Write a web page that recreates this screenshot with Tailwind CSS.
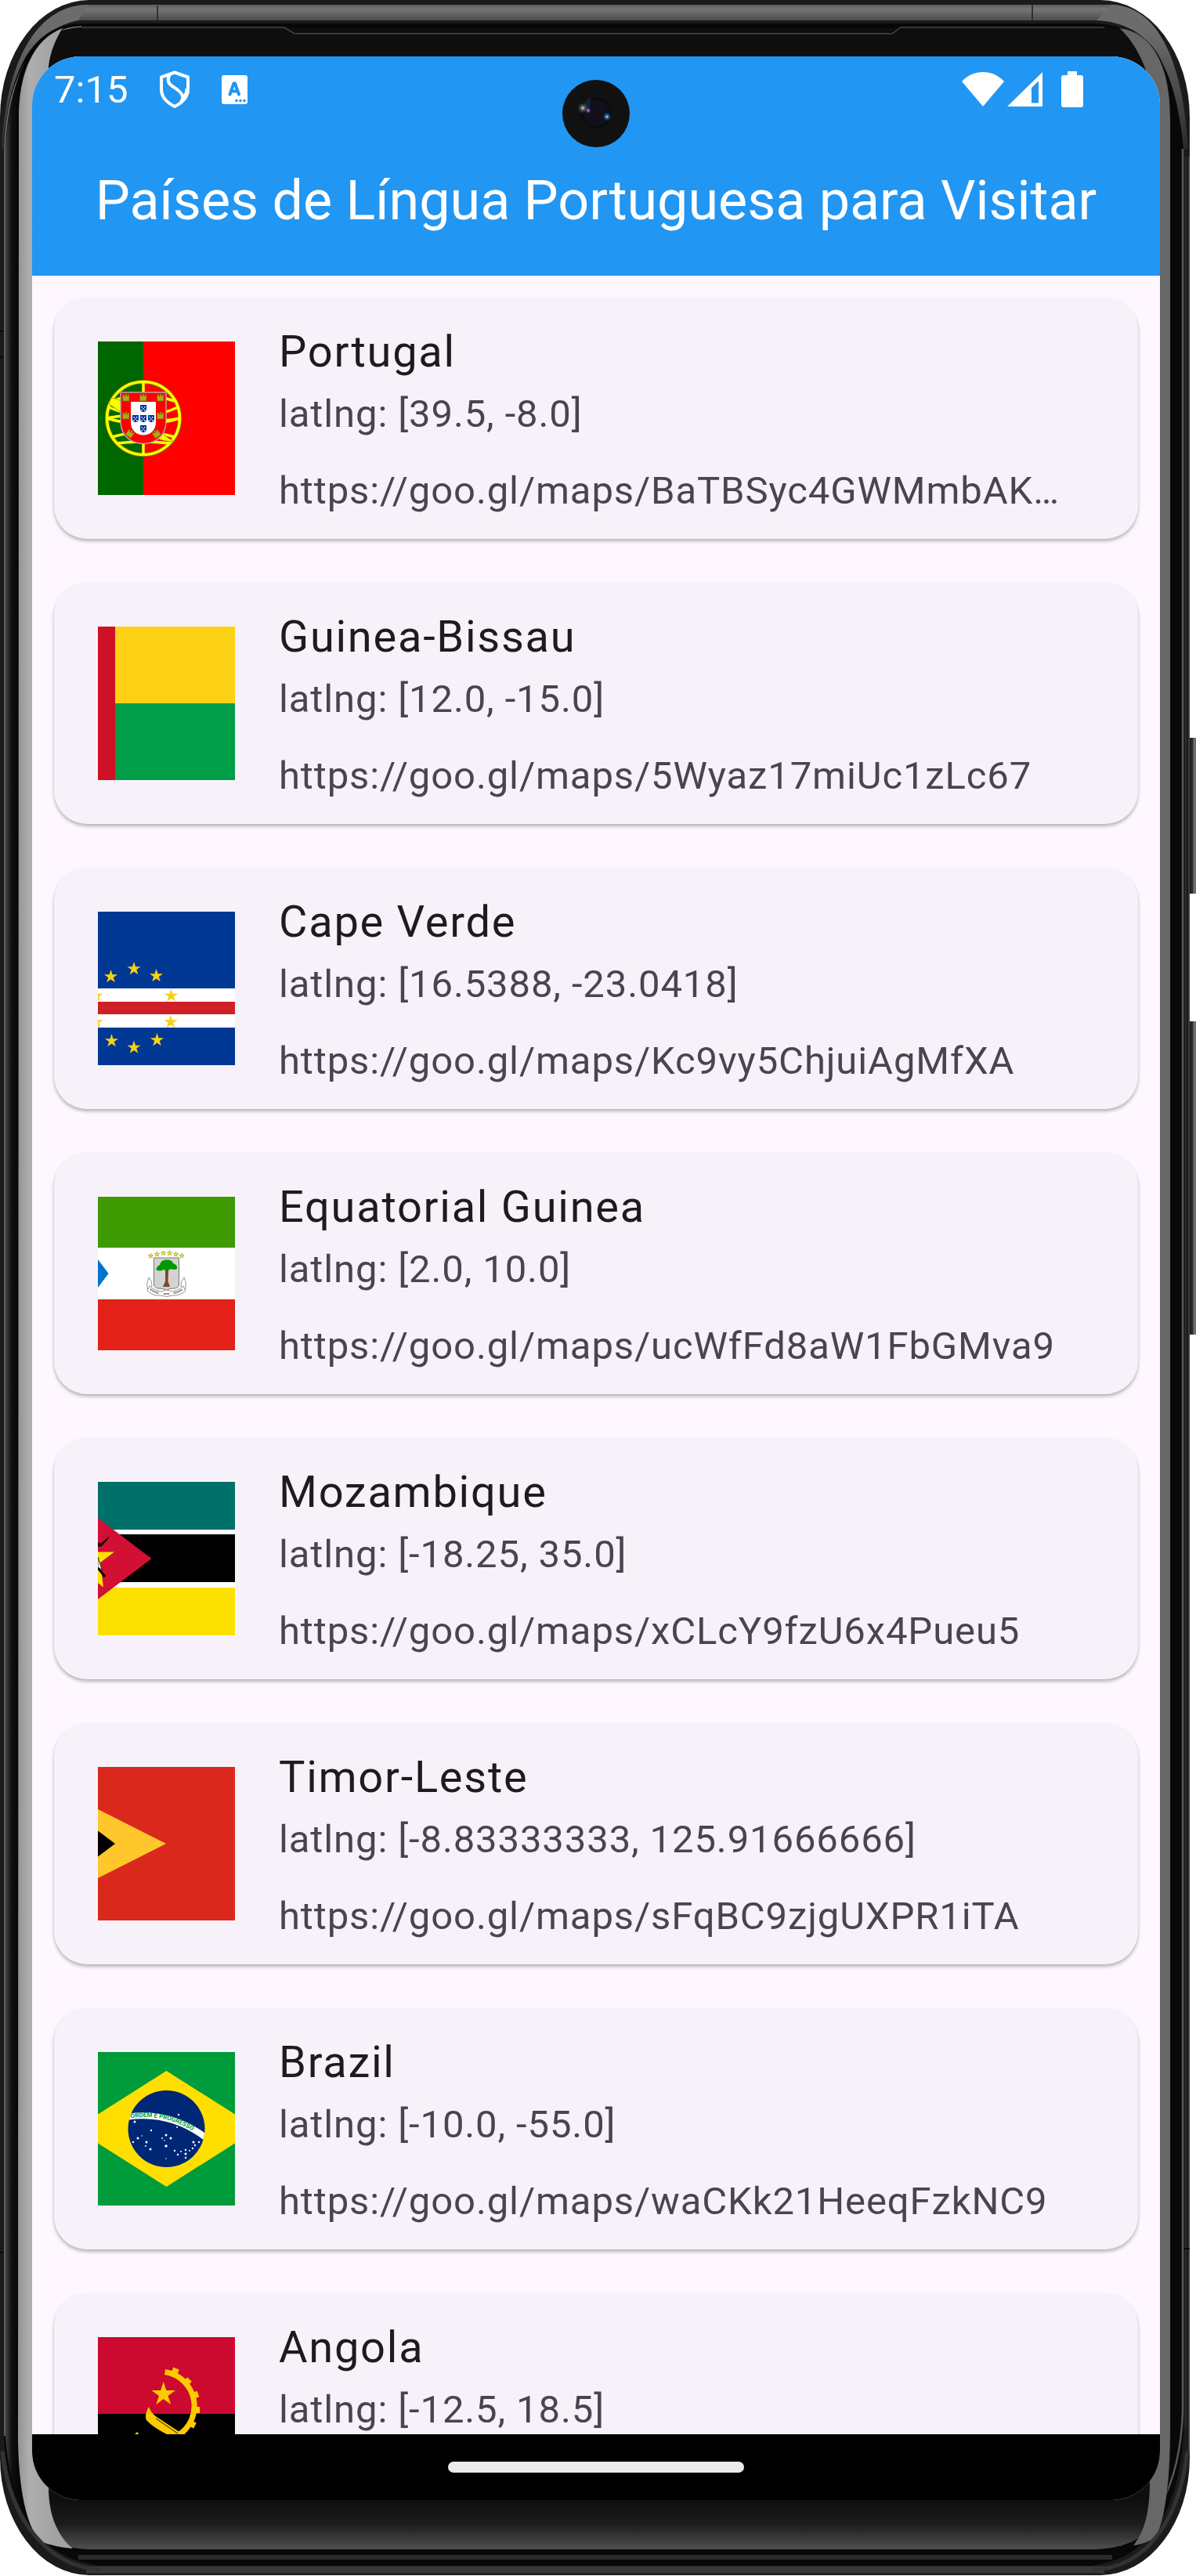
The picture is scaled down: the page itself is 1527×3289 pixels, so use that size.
<!DOCTYPE html>
<html lang="pt">
<head>
<meta charset="utf-8">
<meta name="viewport" content="width=device-width, initial-scale=1">
<title>Países de Língua Portuguesa para Visitar</title>
<script src="https://cdn.jsdelivr.net/npm/@tailwindcss/browser@4"></script>
</head>
<body class="bg-white font-[Roboto,sans-serif]">

<!-- Shared star shape -->
<svg class="absolute size-0" aria-hidden="true">
  <defs>
    <polygon id="star" points="0,-10 2.25,-3.09 9.51,-3.09 3.63,1.18 5.88,8.09 0,3.82 -5.88,8.09 -3.63,1.18 -9.51,-3.09 -2.25,-3.09"/>
  </defs>
</svg>

<div class="relative isolate flex h-screen flex-col overflow-hidden pt-[72px] pr-[46px] pb-[97px] pl-[41px]">

  <!-- Device body -->
  <svg class="absolute inset-0 -z-10 h-full w-full" viewBox="0 0 1527 3289" preserveAspectRatio="none" aria-hidden="true">
    <defs>
      <linearGradient id="topBand" x1="0" y1="0" x2="0" y2="1"><stop offset="0" stop-color="#5c5c5c"/><stop offset=".3" stop-color="#757575"/><stop offset="1" stop-color="#4c4c4c"/></linearGradient>
      <linearGradient id="bodyFade" gradientUnits="userSpaceOnUse" x1="0" y1="40" x2="0" y2="190"><stop offset="0" stop-color="#6c6c6c"/><stop offset="1" stop-color="#2a2a2a"/></linearGradient>
      <linearGradient id="leftDark" gradientUnits="userSpaceOnUse" x1="6" y1="0" x2="24" y2="0"><stop offset="0" stop-color="#4a4a4a"/><stop offset=".5" stop-color="#101010"/><stop offset="1" stop-color="#060606"/></linearGradient>
      <linearGradient id="leftShine" gradientUnits="userSpaceOnUse" x1="23" y1="0" x2="70" y2="0"><stop offset="0" stop-color="#939393"/><stop offset=".3" stop-color="#aeaeae"/><stop offset="1" stop-color="#a2a2a2"/></linearGradient>
      <linearGradient id="glass" gradientUnits="userSpaceOnUse" x1="0" y1="3190" x2="0" y2="3255"><stop offset="0" stop-color="#0e0e0e"/><stop offset=".5" stop-color="#1c1c1c"/><stop offset="1" stop-color="#505050"/></linearGradient>
      <linearGradient id="button" x1="0" y1="0" x2="1" y2="0"><stop offset="0" stop-color="#161616"/><stop offset=".45" stop-color="#2c2c2c"/><stop offset=".65" stop-color="#777"/><stop offset="1" stop-color="#555"/></linearGradient>
    </defs>
    <rect x="1517" y="942" width="12" height="199" rx="3" fill="url(#button)"/>
    <rect x="1517" y="1304" width="12" height="400" rx="3" fill="url(#button)"/>
    <rect x="0" y="0" width="1519" height="3288" rx="114" ry="150" fill="#1b1b1b"/>
    <path d="M2 190 C8 70 52 6 112 6 H1420 C1475 8 1510 70 1517 190 L1508 190 C1500 80 1470 30 1400 26 H100 C50 36 14 80 8 190 Z" fill="url(#bodyFade)"/>
    <path d="M112 6 H1420 L1400 26 H100 Z" fill="url(#topBand)"/>
    <path d="M201 7V29M1318 4V26" stroke="#222" stroke-width="1.5"/>
    <path d="M5 190 C10 80 48 30 104 30 H1400 C1470 34 1500 80 1511 190 V3110 C1504 3215 1460 3270 1390 3276 H130 C60 3270 10 3215 5 3110 Z" fill="#080808"/>
    <path d="M6 3110 V190 C10 90 48 36 104 34" fill="none" stroke="#777" stroke-width="1.5"/>
    <path d="M7 3110 V190 C14 90 40 50 80 36 L90 3254 C40 3240 12 3190 7 3110Z" fill="url(#leftDark)"/>
    <path d="M1510 190 V3080 C1506 3180 1470 3230 1430 3250" fill="none" stroke="#565656" stroke-width="2.5"/>
    <path d="M1514 200V3100" stroke="#3a3a3a" stroke-width="1"/>
    <path d="M1518 200V3130" stroke="#5a5a5a" stroke-width="1"/>
    <!-- Front glass -->
    <path d="M24 150 C24 80 45 36 104 36 H1410 C1475 36 1495 80 1495 150 V3130 C1495 3225 1460 3255 1390 3255 H120 C50 3255 23 3215 24 3130 Z" fill="url(#glass)"/>
    <path d="M80 36 C42 50 24 95 24 150 L23 3120 C25 3195 38 3230 52 3245 Q70 3252 93 3254 C70 3235 62 3205 62 3176 V85 C64 66 72 48 80 36Z" fill="url(#leftShine)"/>
    <path d="M1429 36 C1475 42 1494 90 1494 150 V3100 C1494 3175 1486 3222 1475 3240 Q1462 3248 1447 3250 C1462 3232 1468 3205 1468 3168 V110 C1464 82 1446 50 1429 36Z" fill="#676767"/>
    <path d="M104 35 H363 L376 43 H1139 L1150 35 H1410" fill="none" stroke="#454545" stroke-width="1.5"/>
    <!-- Lower rim -->
    <path d="M100 3265 H1420" stroke="#2b2b2b" stroke-width="6"/>
    <path d="M110 3281 H1410" stroke="#383838" stroke-width="9"/>
    <path d="M3 3130 C12 3215 60 3278 130 3281 M1516 3130 C1506 3215 1466 3278 1396 3281" fill="none" stroke="#333" stroke-width="5"/>
    <path d="M0 423H4M0 456H4M0 2876H4M1512 2871H1519" stroke="#050505" stroke-width="2"/>
  </svg>

  <!-- Screen -->
  <div class="relative flex min-h-0 flex-1 flex-col overflow-hidden rounded-[62px] bg-[#fef7ff]">

    <!-- Front camera -->
    <svg class="absolute top-[30px] left-1/2 z-10 size-[86px] -translate-x-1/2" viewBox="0 0 86 86" aria-hidden="true">
      <defs>
        <radialGradient id="lens"><stop offset="0" stop-color="#160d1a"/><stop offset=".7" stop-color="#10101c"/><stop offset="1" stop-color="#0a0a0b"/></radialGradient>
        <radialGradient id="glowA"><stop offset="0" stop-color="#eef5e0"/><stop offset=".3" stop-color="#8d9684" stop-opacity=".7"/><stop offset="1" stop-color="#3c4238" stop-opacity="0"/></radialGradient>
        <radialGradient id="glowB"><stop offset="0" stop-color="#d8f1ff"/><stop offset=".3" stop-color="#2c75b0"/><stop offset="1" stop-color="#0c2a55" stop-opacity="0"/></radialGradient>
        <radialGradient id="glowC"><stop offset="0" stop-color="#e9b8e8"/><stop offset=".4" stop-color="#6a3f80"/><stop offset="1" stop-color="#25204a" stop-opacity="0"/></radialGradient>
      </defs>
      <circle cx="43" cy="43" r="43" fill="#101111"/>
      <circle cx="43" cy="42" r="20" fill="url(#lens)"/>
      <path d="M25 35 C28 26 32 24 37 23 L33 44 Z" fill="#23406e" opacity=".4"/>
      <circle cx="26" cy="36" r="7" fill="url(#glowA)"/>
      <circle cx="33" cy="39" r="4" fill="url(#glowC)"/>
      <circle cx="57" cy="47" r="6" fill="url(#glowB)"/>
    </svg>

    <header class="bg-[#2196f3] text-white">
      <!-- Status bar -->
      <div class="flex h-[84px] items-center pr-[98px] pl-7">
        <span class="text-[49px] leading-none">7:15</span>
        <svg class="ml-10 h-12 w-10" viewBox="0 0 40 48" fill="none" stroke="#fff" stroke-width="4" stroke-linejoin="round" aria-hidden="true">
          <path d="M20 2.500 L37 8.500 V24 C37 34 30 41 20 46 C10 41 3 34 3 24 V8.500 Z"/>
          <path d="M14 5 C10 12 12 17 17 20 C25 25 30 29 30 33 C31 36 30 38 28 40"/>
          <path d="M35 23 C35 30 32 33 30 34" stroke-width="3"/>
        </svg>
        <svg class="ml-10 h-[37px] w-[33px]" viewBox="0 0 33 37" aria-hidden="true">
          <rect width="33" height="37" rx="3" fill="#fff"/>
          <path d="M10.500 24.500 L15.500 10.500 H17 L22 24.500 M12.500 20.500 H20" fill="none" stroke="#2196f3" stroke-width="4" stroke-linecap="round" stroke-linejoin="round"/>
          <g fill="#2196f3"><circle cx="19" cy="32.500" r="1.800"/><circle cx="24" cy="32.500" r="1.800"/><circle cx="29" cy="32.500" r="1.800"/></g>
        </svg>
        <svg class="ml-auto h-11 w-[54px]" viewBox="0 0 54 44" fill="#fff" aria-hidden="true"><path d="M0 12 C14 -4 40 -4 54 12 L27 44Z"/></svg>
        <svg class="ml-1 h-11 w-[45px]" viewBox="0 0 45 44" aria-hidden="true"><path fill="#fff" fill-rule="evenodd" d="M45 0V44H0Z M40 11.500 L31 20V39.500H40Z"/></svg>
        <svg class="ml-6 h-[46px] w-7" viewBox="0 0 28 46" fill="#fff" aria-hidden="true"><path d="M8 0H20V5H25Q28 5 28 8V43Q28 46 25 46H3Q0 46 0 43V8Q0 5 3 5H8Z"/></svg>
      </div>
      <h1 class="flex h-[196px] items-center justify-center pt-1 text-[70px] leading-none whitespace-nowrap">Países de Língua Portuguesa para Visitar</h1>
    </header>

    <main class="min-h-0 flex-1 overflow-hidden px-7 pt-7">
      <ul class="flex flex-col gap-14">

        <li class="flex items-start gap-14 rounded-[42px] bg-[#f7f2fa] px-14 pt-7 pb-[26px] shadow-[0_3px_4px_rgba(0,0,0,0.28)]">
          <svg class="mt-7 h-[196px] w-[175px] shrink-0" viewBox="0 0 175 196" role="img" aria-label="Bandeira de Portugal">
            <rect width="175" height="196" fill="#f00"/><rect width="58" height="196" fill="#060"/>
            <g fill="none" stroke="#777a00" stroke-width="5"><circle cx="58" cy="98" r="46.500"/></g>
            <g fill="none" stroke="#ff0" stroke-width="3.500">
              <circle cx="58" cy="98" r="46.500"/>
              <path d="M58 50V146M11 98 Q58 112 105 98M18 76 Q58 62 98 76M14 84 Q60 104 102 84M18 122 Q58 110 98 122M24 130 Q58 126 92 130M11 98 Q40 92 58 98 T105 98"/>
            </g>
            <path d="M17 72 Q35 74 60 98 T98 128 Q72 128 50 108 T14 80Z" fill="#ff0" stroke="#8a8a00" stroke-width=".7"/>
            <path d="M29 65H87V102C87 140 29 140 29 102Z" fill="#f00" stroke="#c0a0a0" stroke-width="1.500"/>
            <path d="M42 77H74V103C74 125 42 125 42 103Z" fill="#fff"/>
            <g fill="#b5a51a" stroke="#6f6500" stroke-width=".6">
              <path id="castle" d="M31.500 76V68H34V70H35V67H37V70H38V68H40V76Z"/>
              <use href="#castle" x="22"/><use href="#castle" x="44"/><use href="#castle" y="23"/><use href="#castle" x="44" y="23"/>
              <use href="#castle" transform="translate(41 118) rotate(35) translate(-36 -72)"/>
              <use href="#castle" transform="translate(75 118) rotate(-35) translate(-36 -72)"/>
            </g>
            <g fill="#039">
              <path id="quina" d="M54 81H62V86C62 91.500 54 91.500 54 86Z"/>
              <use href="#quina" y="13"/><use href="#quina" y="26"/><use href="#quina" x="-10" y="13"/><use href="#quina" x="10" y="13"/>
            </g>
            <g fill="#fff">
              <path id="dots" d="M55.500 83h1.400v1.400h-1.400zM59 83h1.400v1.400h-1.400zM57.300 85h1.400v1.400h-1.400zM55.500 87h1.400v1.400h-1.400zM59 87h1.400v1.400h-1.400z"/>
              <use href="#dots" y="13"/><use href="#dots" y="26"/><use href="#dots" x="-10" y="13"/><use href="#dots" x="10" y="13"/>
            </g>
          </svg>
          <div class="flex min-w-0 flex-1 flex-col whitespace-nowrap text-[#49454f]">
            <h2 class="mb-1 text-[56px] leading-[82px] tracking-[0.031em] text-[#1d1b20]">Portugal</h2>
            <p class="text-[49px] leading-[70px] tracking-[0.018em]">latlng: [39.5, -8.0]</p>
            <a href="#" class="mt-7 truncate text-[49px] leading-[70px] tracking-[0.018em]">https://goo.gl/maps/BaTBSyc4GWMmbAK…</a>
          </div>
        </li>

        <li class="flex items-start gap-14 rounded-[42px] bg-[#f7f2fa] px-14 pt-7 pb-[26px] shadow-[0_3px_4px_rgba(0,0,0,0.28)]">
          <svg class="mt-7 h-[196px] w-[175px] shrink-0" viewBox="0 0 175 196" role="img" aria-label="Bandeira da Guiné-Bissau">
            <rect width="175" height="98" fill="#fcd116"/><rect y="98" width="175" height="98" fill="#009e49"/><rect width="22" height="196" fill="#ce1126"/>
          </svg>
          <div class="flex min-w-0 flex-1 flex-col whitespace-nowrap text-[#49454f]">
            <h2 class="mb-1 text-[56px] leading-[82px] tracking-[0.031em] text-[#1d1b20]">Guinea-Bissau</h2>
            <p class="text-[49px] leading-[70px] tracking-[0.018em]">latlng: [12.0, -15.0]</p>
            <a href="#" class="mt-7 truncate text-[49px] leading-[70px] tracking-[0.018em]">https://goo.gl/maps/5Wyaz17miUc1zLc67</a>
          </div>
        </li>

        <li class="flex items-start gap-14 rounded-[42px] bg-[#f7f2fa] px-14 pt-7 pb-[26px] shadow-[0_3px_4px_rgba(0,0,0,0.28)]">
          <svg class="mt-7 h-[196px] w-[175px] shrink-0" viewBox="0 0 175 196" role="img" aria-label="Bandeira de Cabo Verde">
            <rect width="175" height="196" fill="#003893"/><rect y="98" width="175" height="50" fill="#fff"/><rect y="115" width="175" height="16" fill="#cf2027"/>
            <g fill="#f7d116">
              <use href="#star" transform="translate(16.500 83) scale(.9)"/><use href="#star" transform="translate(46 73) scale(.9)"/><use href="#star" transform="translate(74.500 82) scale(.9)"/>
              <use href="#star" transform="translate(93.500 107.500) scale(.9)"/><use href="#star" transform="translate(93 141) scale(.9)"/><use href="#star" transform="translate(75.500 164) scale(.9)"/>
              <use href="#star" transform="translate(46 173.500) scale(.9)"/><use href="#star" transform="translate(17.500 165) scale(.9)"/><use href="#star" transform="translate(-2 107.500) scale(.9)"/><use href="#star" transform="translate(-2 141) scale(.9)"/>
            </g>
          </svg>
          <div class="flex min-w-0 flex-1 flex-col whitespace-nowrap text-[#49454f]">
            <h2 class="mb-1 text-[56px] leading-[82px] tracking-[0.031em] text-[#1d1b20]">Cape Verde</h2>
            <p class="text-[49px] leading-[70px] tracking-[0.018em]">latlng: [16.5388, -23.0418]</p>
            <a href="#" class="mt-7 truncate text-[49px] leading-[70px] tracking-[0.018em]">https://goo.gl/maps/Kc9vy5ChjuiAgMfXA</a>
          </div>
        </li>

        <li class="flex items-start gap-14 rounded-[42px] bg-[#f7f2fa] px-14 pt-7 pb-[26px] shadow-[0_3px_4px_rgba(0,0,0,0.28)]">
          <svg class="mt-7 h-[196px] w-[175px] shrink-0" viewBox="0 0 175 196" role="img" aria-label="Bandeira da Guiné Equatorial">
            <rect width="175" height="196" fill="#fff"/><rect width="175" height="65" fill="#3e9a00"/><rect y="131" width="175" height="65" fill="#e32118"/>
            <path d="M0 80 L13.500 98 L0 116Z" fill="#0073ce"/>
            <g fill="#ff0" stroke="#8a8a20" stroke-width="2">
              <use href="#star" transform="translate(67.500 75.500) scale(.32)"/><use href="#star" transform="translate(75.500 73.500) scale(.32)"/><use href="#star" transform="translate(83.500 72) scale(.32)"/>
              <use href="#star" transform="translate(91.500 72) scale(.32)"/><use href="#star" transform="translate(99.500 73.500) scale(.32)"/><use href="#star" transform="translate(107 75.500) scale(.32)"/>
            </g>
            <path d="M71.500 78H103.500V112Q103.500 116 98 117Q90 117 87.500 120Q85 117 77 117Q71.500 116 71.500 112Z" fill="#d3d3d3" stroke="#777" stroke-width="1"/>
            <path d="M86 94H90L89.500 108L92 115H83L86 108Z" fill="#7a4a25"/>
            <path d="M74 93 Q76 88 79 87 Q80 81 87 80.500 Q95 80 96 85 Q102 87 101 92 Q97 94 93 92 Q89 96 84 93 Q79 96 74 93Z" fill="#090"/>
            <g fill="#fff" stroke="#777" stroke-width=".8">
              <path d="M65 103 Q61 112 64 119 L69 114Q70 109 65 103ZM110 103 Q114 112 111 119 L106 114Q105 109 110 103Z"/>
              <path d="M66 114 Q74 121 82 121 Q87.500 117 93 121 Q101 121 109 114 L112 120 Q104 127 95 126 Q87.500 129 80 126 Q71 127 63 120Z"/>
            </g>
            <path d="M67 118Q72 122 78 123M84 124H91M97 123Q103 122 108 118" fill="none" stroke="#6b4545" stroke-width="2" stroke-dasharray="1.200 .8"/>
          </svg>
          <div class="flex min-w-0 flex-1 flex-col whitespace-nowrap text-[#49454f]">
            <h2 class="mb-1 text-[56px] leading-[82px] tracking-[0.031em] text-[#1d1b20]">Equatorial Guinea</h2>
            <p class="text-[49px] leading-[70px] tracking-[0.018em]">latlng: [2.0, 10.0]</p>
            <a href="#" class="mt-7 truncate text-[49px] leading-[70px] tracking-[0.018em]">https://goo.gl/maps/ucWfFd8aW1FbGMva9</a>
          </div>
        </li>

        <li class="flex items-start gap-14 rounded-[42px] bg-[#f7f2fa] px-14 pt-7 pb-[26px] shadow-[0_3px_4px_rgba(0,0,0,0.28)]">
          <svg class="mt-7 h-[196px] w-[175px] shrink-0" viewBox="0 0 175 196" role="img" aria-label="Bandeira de Moçambique">
            <rect width="175" height="196" fill="#fff"/><rect width="175" height="61" fill="#007168"/><rect y="67" width="175" height="61" fill="#000"/><rect y="135" width="175" height="61" fill="#fce100"/>
            <path d="M0 46 L68.500 98 L0 150Z" fill="#d21034"/>
            <path d="M0 89.500H21L3 103L7 134.500L0 129Z" fill="#fce100"/>
            <path d="M0 77 Q3 80 6 77 L15 69 L12 74 L5 82 L0 83Z" fill="#000"/>
            <path d="M0 96 L5 112 L0 110Z" fill="#fff" stroke="#000" stroke-width=".8"/>
            <path d="M0 110 L9 121" stroke="#000" stroke-width="3"/>
          </svg>
          <div class="flex min-w-0 flex-1 flex-col whitespace-nowrap text-[#49454f]">
            <h2 class="mb-1 text-[56px] leading-[82px] tracking-[0.031em] text-[#1d1b20]">Mozambique</h2>
            <p class="text-[49px] leading-[70px] tracking-[0.018em]">latlng: [-18.25, 35.0]</p>
            <a href="#" class="mt-7 truncate text-[49px] leading-[70px] tracking-[0.018em]">https://goo.gl/maps/xCLcY9fzU6x4Pueu5</a>
          </div>
        </li>

        <li class="flex items-start gap-14 rounded-[42px] bg-[#f7f2fa] px-14 pt-7 pb-[26px] shadow-[0_3px_4px_rgba(0,0,0,0.28)]">
          <svg class="mt-7 h-[196px] w-[175px] shrink-0" viewBox="0 0 175 196" role="img" aria-label="Bandeira de Timor-Leste">
            <rect width="175" height="196" fill="#da291c"/><path d="M0 54 L87 98 L0 142Z" fill="#ffc72c"/><path d="M0 81.500 L22 98 L0 114.500Z" fill="#000"/>
          </svg>
          <div class="flex min-w-0 flex-1 flex-col whitespace-nowrap text-[#49454f]">
            <h2 class="mb-1 text-[56px] leading-[82px] tracking-[0.031em] text-[#1d1b20]">Timor-Leste</h2>
            <p class="text-[49px] leading-[70px] tracking-[0.018em]">latlng: [-8.83333333, 125.91666666]</p>
            <a href="#" class="mt-7 truncate text-[49px] leading-[70px] tracking-[0.018em]">https://goo.gl/maps/sFqBC9zjgUXPR1iTA</a>
          </div>
        </li>

        <li class="flex items-start gap-14 rounded-[42px] bg-[#f7f2fa] px-14 pt-7 pb-[26px] shadow-[0_3px_4px_rgba(0,0,0,0.28)]">
          <svg class="mt-7 h-[196px] w-[175px] shrink-0" viewBox="0 0 175 196" role="img" aria-label="Bandeira do Brasil">
            <defs>
              <clipPath id="globe"><circle cx="87.500" cy="98" r="49"/></clipPath>
              <path id="motto" d="M42 84.500 Q93 76 138 113"/>
            </defs>
            <rect width="175" height="196" fill="#009b3a"/>
            <path d="M-29 98 L87.500 24 L204 98 L87.500 172Z" fill="#fedf00"/>
            <circle cx="87.500" cy="98" r="49" fill="#002776"/>
            <path d="M36 83 Q93 74 140 111" fill="none" stroke="#fff" stroke-width="8" clip-path="url(#globe)"/>
            <text class="text-[8px] font-bold" fill="#009b3a"><textPath href="#motto">ORDEM E PROGRESSO</textPath></text>
            <g fill="#fff">
              <circle cx="103" cy="80" r="1.200"/><circle cx="47" cy="89" r="1.500"/><circle cx="101" cy="96" r="1"/><circle cx="68" cy="100" r="1.200"/><circle cx="51" cy="110" r="1.500"/><circle cx="56" cy="107" r=".8"/><circle cx="45" cy="115" r="1.200"/><circle cx="62" cy="115" r="1.500"/><circle cx="61" cy="120" r="1"/><circle cx="67" cy="124" r="1.500"/><circle cx="87" cy="106" r="1.500"/><circle cx="82" cy="110" r="1"/><circle cx="93" cy="110" r="1.500"/><circle cx="85" cy="113" r=".8"/><circle cx="87" cy="120" r="1.700"/><circle cx="87" cy="136" r=".8"/><circle cx="98" cy="126" r="1.200"/><circle cx="102" cy="131" r="1.200"/><circle cx="106" cy="127" r="1"/><circle cx="112" cy="125" r="1.200"/><circle cx="112" cy="130" r="1.500"/><circle cx="112" cy="135" r="1.200"/><circle cx="117" cy="126" r="1"/><circle cx="121" cy="123" r="1.200"/><circle cx="124" cy="119" r="1.200"/><circle cx="122" cy="115" r="1.500"/><circle cx="129" cy="115" r="1.200"/>
            </g>
          </svg>
          <div class="flex min-w-0 flex-1 flex-col whitespace-nowrap text-[#49454f]">
            <h2 class="mb-1 text-[56px] leading-[82px] tracking-[0.031em] text-[#1d1b20]">Brazil</h2>
            <p class="text-[49px] leading-[70px] tracking-[0.018em]">latlng: [-10.0, -55.0]</p>
            <a href="#" class="mt-7 truncate text-[49px] leading-[70px] tracking-[0.018em]">https://goo.gl/maps/waCKk21HeeqFzkNC9</a>
          </div>
        </li>

        <li class="flex items-start gap-14 rounded-[42px] bg-[#f7f2fa] px-14 pt-7 pb-[26px] shadow-[0_3px_4px_rgba(0,0,0,0.28)]">
          <svg class="mt-7 h-[196px] w-[175px] shrink-0" viewBox="0 0 175 196" role="img" aria-label="Bandeira de Angola">
            <rect width="175" height="98" fill="#cc092f"/><rect y="98" width="175" height="98" fill="#000"/>
            <g fill="none" stroke="#ffcb00">
              <path d="M85.500 44.500 A44 44 0 0 1 103 125" stroke-width="7"/>
              <path d="M97.500 46.500 L100 40M112 59 L117 54M121 75 L128 72.500M122 93 H130M118 110 L124 113" stroke-width="8"/>
            </g>
            <use href="#star" transform="translate(83.700 73) scale(1.600)" fill="#ffcb00"/>
            <path d="M65 89 Q59 100 62 106 Q70 115 88 124 L100 132 L112 123 L104 121 L75 102 Q67 96 65 89Z" fill="#ffcb00"/>
            <path d="M74 104 L102 123" stroke="#000" stroke-width=".9"/>
            <path d="M47 124 L50 121 L54 126Z" fill="#ffcb00"/>
          </svg>
          <div class="flex min-w-0 flex-1 flex-col whitespace-nowrap text-[#49454f]">
            <h2 class="mb-1 text-[56px] leading-[82px] tracking-[0.031em] text-[#1d1b20]">Angola</h2>
            <p class="text-[49px] leading-[70px] tracking-[0.018em]">latlng: [-12.5, 18.5]</p>
          </div>
        </li>
      </ul>
    </main>

    <!-- Gesture bar -->
    <div class="flex h-[84px] shrink-0 items-center justify-center bg-black">
      <div class="h-3.5 w-[378px] rounded-full bg-[#ebebeb]"></div>
    </div>
  </div>
</div>
</body>
</html>
